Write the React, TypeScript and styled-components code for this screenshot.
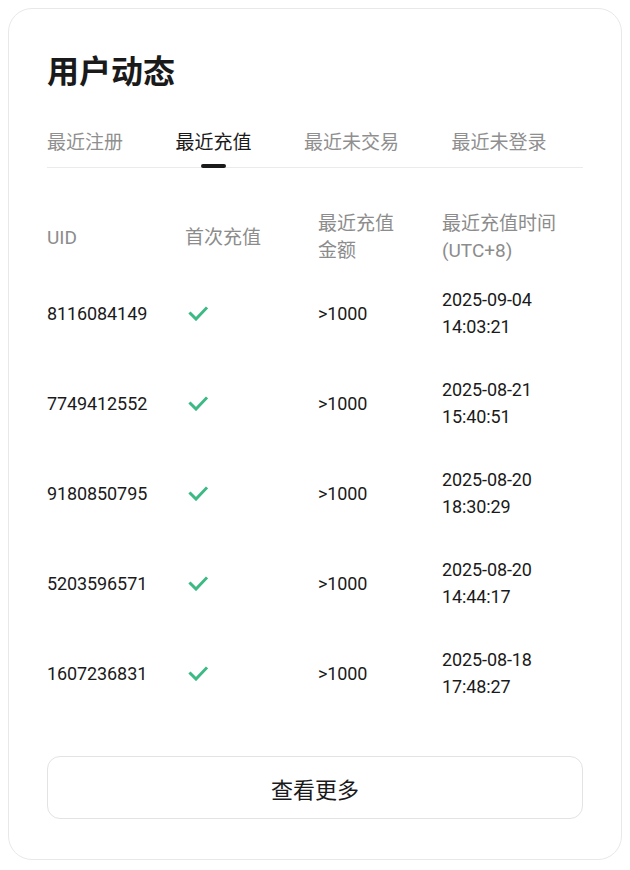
import React, { useState } from "react";
import styled, { createGlobalStyle } from "styled-components";

const GlobalStyle = createGlobalStyle`
    body {
        margin: 8px;
        background: #ffffff;
        font-family: Roboto, "Noto Sans CJK SC", sans-serif;
        color: #1a1a1a;
    }
`;

const Card = styled.div`
    border: 1px solid #e8e8e8;
    border-radius: 24px;
    padding: 40px 38px 40px;
    background: #fff;
`;

const Title = styled.h2`
    margin: 0;
    font-size: 32px;
    line-height: 40px;
    font-weight: 700;
    font-family: "Noto Sans CJK SC", sans-serif;
    color: #1a1a1a;
`;

const Tabs = styled.div`
    display: flex;
    gap: 52.5px;
    margin-top: 39px;
    border-bottom: 1px solid #ebebeb;
`;

const Tab = styled.div<{ $active?: boolean }>`
    position: relative;
    font-family: "Noto Sans CJK SC", sans-serif;
    font-size: 19px;
    line-height: 26px;
    padding-bottom: 13px;
    color: ${(p) => (p.$active ? "#1a1a1a" : "#8f8f8f")};
    cursor: pointer;

    &::after {
        content: "";
        display: ${(p) => (p.$active ? "block" : "none")};
        position: absolute;
        left: 50%;
        bottom: -1px;
        width: 25px;
        height: 4px;
        margin-left: -13px;
        border-radius: 2px;
        background: #1a1a1a;
    }
`;

const Table = styled.div`
    margin-top: 42px;
`;

const Row = styled.div<{ $head?: boolean }>`
    display: grid;
    grid-template-columns: 138px 133px 124px 1fr;
    align-items: center;
    height: ${(p) => (p.$head ? "54px" : "90px")};
    margin-bottom: ${(p) => (p.$head ? "4px" : "0")};
`;

const HeadCell = styled.div`
    font-family: Roboto, "Noto Sans CJK SC", sans-serif;
    font-size: 19px;
    line-height: 27px;
    color: #8c8c8c;
`;

const Cell = styled.div`
    font-family: Roboto, "Noto Sans CJK SC", sans-serif;
    font-size: 18px;
    line-height: 27px;
    color: #1a1a1a;
    letter-spacing: -0.1px;
`;

const CheckWrap = styled.div`
    display: flex;
    align-items: center;
    padding-left: 3px;
`;

const MoreButton = styled.button`
    display: block;
    width: 100%;
    height: 63px;
    margin-top: 38px;
    border: 1px solid #e3e3e3;
    border-radius: 13px;
    background: #fff;
    font-family: "Noto Sans CJK SC", sans-serif;
    font-size: 22px;
    color: #1a1a1a;
    cursor: pointer;
`;

type Record = { uid: string; date: string; time: string };

const records: Record[] = [
    { uid: "8116084149", date: "2025-09-04", time: "14:03:21" },
    { uid: "7749412552", date: "2025-08-21", time: "15:40:51" },
    { uid: "9180850795", date: "2025-08-20", time: "18:30:29" },
    { uid: "5203596571", date: "2025-08-20", time: "14:44:17" },
    { uid: "1607236831", date: "2025-08-18", time: "17:48:27" },
];

const tabs = ["最近注册", "最近充值", "最近未交易", "最近未登录"];

function CheckIcon() {
    return (
        <svg width="20" height="15" viewBox="0 0 20 15" fill="none">
            <path d="M2.5 7.5 L8 13 L18 2.5" stroke="#3dba84" strokeWidth="3" strokeLinecap="square" strokeLinejoin="miter" />
        </svg>
    );
}

export default function App() {
    const [active, setActive] = useState(1);

    return (
        <>
            <GlobalStyle />
            <Card>
                <Title>用户动态</Title>
                <Tabs>
                    {tabs.map((t, i) => (
                        <Tab key={t} $active={i === active} onClick={() => setActive(i)}>{t}</Tab>
                    ))}
                </Tabs>
                <Table>
                    <Row $head>
                        <HeadCell>UID</HeadCell>
                        <HeadCell>首次充值</HeadCell>
                        <HeadCell>最近充值<br />金额</HeadCell>
                        <HeadCell>最近充值时间<br />(UTC+8)</HeadCell>
                    </Row>
                    {records.map((r) => (
                        <Row key={r.uid}>
                            <Cell>{r.uid}</Cell>
                            <CheckWrap><CheckIcon /></CheckWrap>
                            <Cell>&gt;1000</Cell>
                            <Cell>{r.date}<br />{r.time}</Cell>
                        </Row>
                    ))}
                </Table>
                <MoreButton>查看更多</MoreButton>
            </Card>
        </>
    );
}
